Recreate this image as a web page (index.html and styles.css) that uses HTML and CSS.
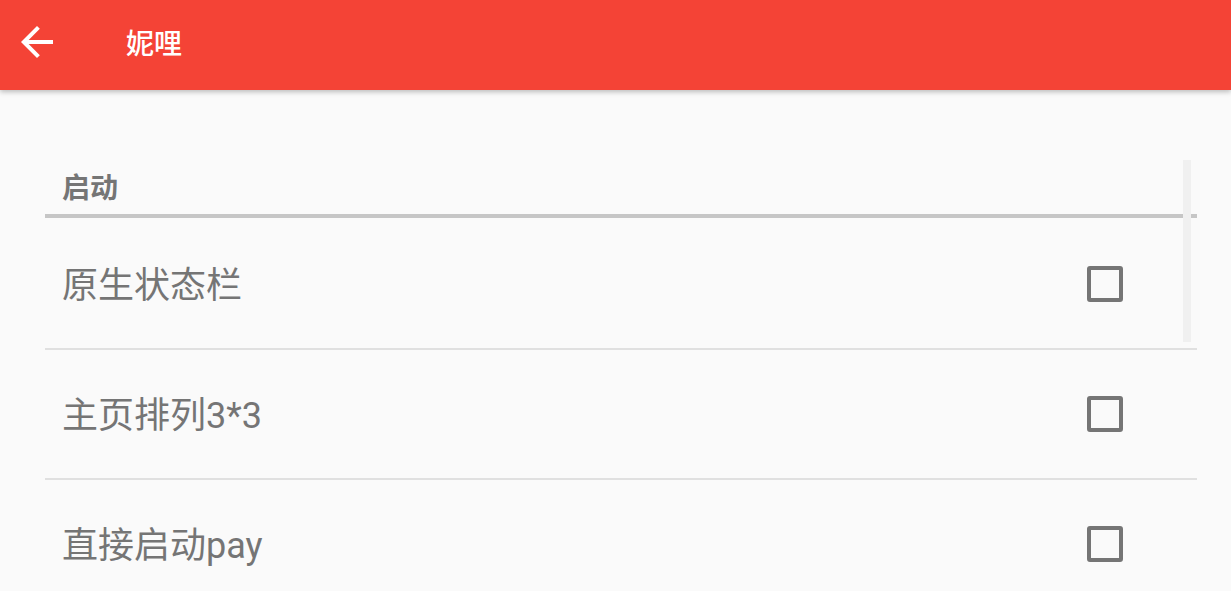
FILE: index.html
```html
<!DOCTYPE html>
<html lang="zh">
<head>
<meta charset="UTF-8">
<meta name="viewport" content="width=device-width, initial-scale=1.0">
<title>妮哩</title>
<link rel="stylesheet" href="styles.css">
</head>
<body>
    <div class="toolbar">
        <svg class="back" viewBox="0 0 24 24" width="48" height="48">
            <path d="M20 11H7.83l5.59-5.59L12 4l-8 8 8 8 1.41-1.41L7.83 13H20v-2z" fill="#fff"/>
        </svg>
        <span class="title">妮哩</span>
    </div>

    <div class="prefs">
        <div class="category">启动</div>
        <div class="row">
            <span class="label">原生状态栏</span>
            <span class="checkbox"></span>
        </div>
        <div class="row">
            <span class="label">主页排列3*3</span>
            <span class="checkbox"></span>
        </div>
        <div class="row">
            <span class="label">直接启动pay</span>
            <span class="checkbox"></span>
        </div>
        <div class="scrollbar"></div>
    </div>
</body>
</html>
```

FILE: styles.css
```css
body {
    font-family: Roboto, "Noto Sans CJK SC", sans-serif;
    background-color: #fafafa;
    margin: 0;
    height: 591px;
    overflow: hidden;
}

.toolbar {
    height: 90px;
    background-color: #f44336;
    display: flex;
    align-items: center;
    padding: 0 0 6px 13px;
    box-sizing: border-box;
    box-shadow: 0 2px 5px rgba(0, 0, 0, 0.25);
    position: relative;
    z-index: 1;
}

.back {
    display: block;
}

.title {
    color: #fff;
    font-size: 28px;
    font-weight: 500;
    margin-left: 65px;
}

.prefs {
    position: relative;
    margin: 70px 34px 0 45px;
}

.category {
    height: 58px;
    display: flex;
    align-items: center;
    padding: 0 0 3px 17px;
    box-sizing: border-box;
    font-size: 28px;
    font-weight: bold;
    color: #757575;
    border-bottom: 4px solid #c6c6c6;
    margin-bottom: 2px;
}

.row {
    height: 130px;
    display: flex;
    align-items: center;
    justify-content: space-between;
    padding: 0 74px 4px 17px;
    box-sizing: border-box;
    border-bottom: 2px solid #e0e0e0;
}

.label {
    font-size: 36px;
    color: #757575;
}

.checkbox {
    width: 36px;
    height: 36px;
    box-sizing: border-box;
    border: 4px solid #757575;
    border-radius: 3px;
    margin-top: 3px;
}

.scrollbar {
    position: absolute;
    top: 0;
    right: 6px;
    width: 8px;
    height: 182px;
    background-color: #f0f0f0;
}
```
